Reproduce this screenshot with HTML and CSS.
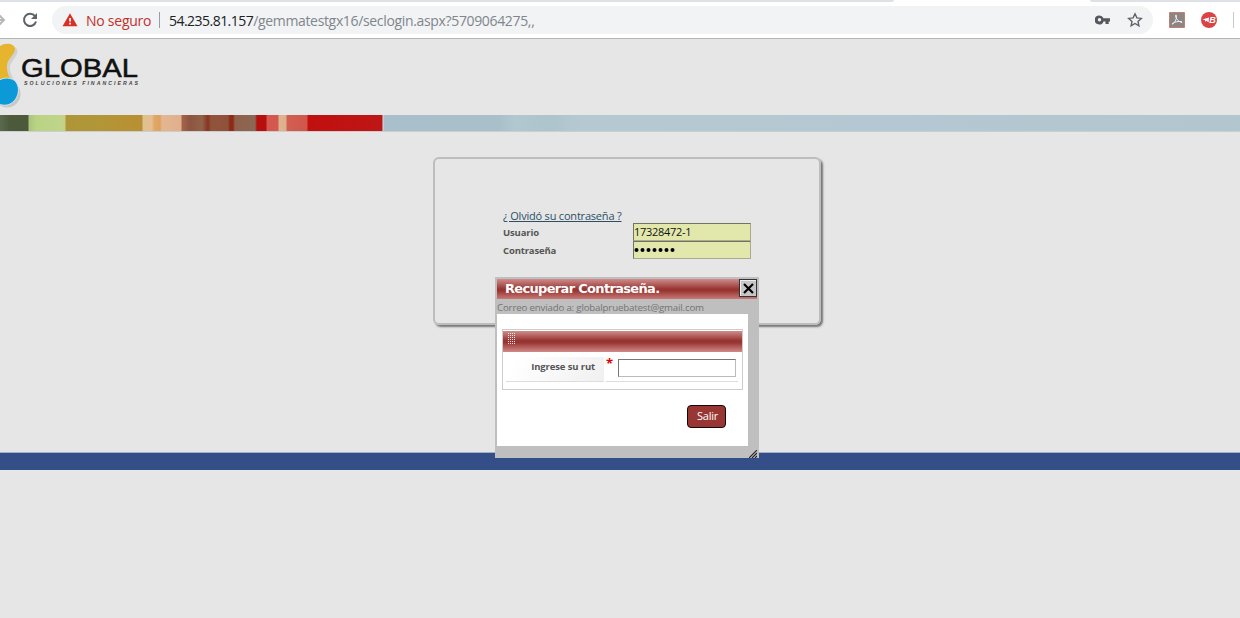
FILE: index.html
```html
<!DOCTYPE html>
<html lang="es">
<head>
<meta charset="utf-8">
<title>Recuperar Contraseña</title>
<link rel="stylesheet" href="styles.css">
</head>
<body>
<header class="browser">
  <div class="tabs"><i class="tab-left"></i><i class="tab-right"></i></div>
  <div class="toolbar">
    <svg class="forward" width="6" height="20" viewBox="0 0 6 20"><path d="M-2 10H4M-1 5L4 10L-1 15" fill="none" stroke="#b5b7ba" stroke-width="2"/></svg>
    <svg class="reload" width="16" height="16" viewBox="0 0 16 16"><path d="M13 4.2A6.1 6.1 0 1 0 14 9.5" fill="none" stroke="#5f6368" stroke-width="2"/><path d="M15 1V7H9Z" fill="#5f6368"/></svg>
    <div class="omnibox">
      <svg class="warn" width="16" height="14" viewBox="0 0 16 14"><path d="M8 .3L15.5 13.3H.5Z" fill="#d93025"/><path d="M7.2 5h1.7v3.6H7.2zM7.2 9.8h1.7v1.7H7.2z" fill="#fff"/></svg>
      <span class="insecure">No seguro</span><i class="sep"></i>
      <span class="host">54.235.81.157</span><span class="path">/gemmatestgx16/seclogin.aspx?5709064275,,</span>
      <svg class="key" width="16" height="10" viewBox="0 0 16 10"><path fill-rule="evenodd" d="M4.5.5A4.5 4.5 0 0 1 8.5 3.2H15V6.4H13.7V9H10.5V6.4H8.5A4.5 4.5 0 1 1 4.5.5ZM4.5 3.1A1.7 1.7 0 1 0 4.5 6.5A1.7 1.7 0 1 0 4.5 3.1Z" fill="#55595e"/></svg>
      <svg class="star" width="16" height="16" viewBox="0 0 16 16"><path d="M8 1.8L9.9 5.9L14.3 6.4L11 9.4L11.9 13.8L8 11.5L4.1 13.8L5 9.4L1.7 6.4L6.1 5.9Z" fill="none" stroke="#5f6368" stroke-width="1.4"/></svg>
    </div>
    <svg class="pdf" width="16" height="16" viewBox="0 0 16 16"><path d="M.5.5h15v15H.5z" fill="#8d8582" stroke="#c08074"/><path d="M3 12.2C5.5 11.5 7.8 7.5 7.4 3.5C7.2 2 6 3 6.8 5C8 8 10 10 13.3 10.6M3 12C5 9.8 9 9 13 9.7" fill="none" stroke="#eee" stroke-width="1"/></svg>
    <svg class="ext" width="16" height="16" viewBox="0 0 16 16"><circle cx="8" cy="8" r="8" fill="#dc4245"/><path d="M1.2 7.4L8 5.4L7.6 10.4L5.6 8.7L4.2 9.8L4 8Z" fill="#fff"/><text x="8.3" y="11.3" class="ext-letter">B</text></svg>
    <i class="bar-end"></i>
  </div>
</header>
<main class="page">
  <div class="brand">
    <svg width="150" height="76" viewBox="0 0 150 76">
      <path d="M0 7C6 3 15 5 15.5 10C16 16 7 20 8 29C9 34 11 37 13 40H0Z" fill="#aaa" opacity=".35" transform="translate(2 2)"/>
      <circle cx="7" cy="55" r="13.5" fill="#aaa" opacity=".5"/>
      <path d="M0 7C6 3 15 5 15 10C15 16 6 20 7 29C7 34 9 37 11 41H0Z" fill="#e6b52d"/>
      <path d="M-2 42C3 38 12 38 16 43C21 50 18 61 10 65C6 67 1 66-2 65Z" fill="#0b9ad7" stroke="#eef0f1" stroke-width=".8"/>
      <text class="logo-name" x="21" y="38" textLength="117" lengthAdjust="spacingAndGlyphs">GLOBAL</text>
      <text class="logo-sub" x="24" y="46" textLength="114">SOLUCIONES FINANCIERAS</text>
    </svg>
  </div>
  <div class="ribbon"></div>
  <section class="content">
    <form class="login">
      <a class="forgot">¿ Olvidó su contraseña ?</a>
      <div class="row"><label>Usuario</label><span class="field">17328472-1</span></div>
      <div class="row"><label>Contraseña</label><span class="field dots"><svg width="44" height="14" viewBox="0 0 44 14"><g fill="#000"><circle cx="2.5" cy="7" r="2"/><circle cx="8.5" cy="7" r="2"/><circle cx="14.5" cy="7" r="2"/><circle cx="20.5" cy="7" r="2"/><circle cx="26.5" cy="7" r="2"/><circle cx="32.5" cy="7" r="2"/><circle cx="38.5" cy="7" r="2"/></g></svg></span></div>
    </form>
  </section>
  <footer class="footer"></footer>
</main>
<div class="modal">
  <div class="titlebar"><span class="title">Recuperar Contraseña.</span>
    <span class="close"><svg width="11" height="11" viewBox="0 0 11 11"><path d="M1 1L10 10M10 1L1 10" stroke="#000" stroke-width="2.2"/></svg></span>
  </div>
  <div class="message">Correo enviado a: globalpruebatest@gmail.com</div>
  <div class="modal-body">
    <div class="group">
      <div class="group-head"><i class="grip"></i></div>
      <div class="group-row">
        <div class="cell-label">Ingrese su rut</div>
        <div class="cell-input"><span class="star-req">*</span><input class="rut" type="text"></div>
      </div>
    </div>
    <div class="actions"><button class="exit" type="button">Salir</button></div>
  </div>
  <svg class="resize" width="8" height="8" viewBox="0 0 8 8"><path d="M0 8L8 0M3 8L8 3M6 8L8 6" stroke="#222" stroke-width="1.1"/></svg>
</div>
</body>
</html>
```
FILE: styles.css
```css
* { box-sizing: border-box; }
body { margin: 0; width: 1240px; height: 618px; overflow: hidden; background: #e6e6e6; font-family: "Open Sans", sans-serif; font-size: 10.5px; color: #555; }
svg { display: block; flex: none; }
.browser { height: 39px; background: #fff; border-bottom: 1px solid #b5b5b5; }
.tabs { height: 2px; display: flex; justify-content: space-between; }
.tab-left { width: 894px; background: #dee1e6; border-radius: 0 0 4px 0; }
.tab-right { width: 150px; background: #dee1e6; border-radius: 0 0 0 4px; }
.toolbar { height: 36px; display: flex; align-items: center; }
.reload { margin-left: 16px; }
.omnibox { width: 1101px; height: 28px; margin-left: 14px; padding: 0 10px; border-radius: 14px; background: #f1f3f4; display: flex; align-items: center; font-size: 14px; white-space: nowrap; }
.insecure { width: 65px; margin-left: 8px; color: #c5302b; letter-spacing: -.25px; }
.sep { width: 1px; height: 16px; margin: 0 9px 0 8px; background: #9a9da1; }
.host { color: #202124; letter-spacing: -.53px; }
.path { color: #80868b; letter-spacing: -.34px; }
.key { margin-left: auto; margin-right: 16px; }
.pdf { margin-left: 16px; }
.ext { margin-left: 16px; }
.ext-letter { font: italic bold 9px "Liberation Sans", sans-serif; fill: #fff; }
.bar-end { width: 1px; height: 16px; margin-left: 16px; background: #c5c7ca; }
.brand { height: 76px; }
.logo-name { font: 25px "Liberation Sans", sans-serif; fill: #111; stroke: #111; stroke-width: .5px; }
.logo-sub { font: italic bold 5.2px "Liberation Sans", sans-serif; fill: #444; }
.ribbon { height: 17px; border-bottom: 1px solid #c9cfd1; background:
  linear-gradient(90deg, #5a6a50 0, #4c5a3b 10px, #4c5a3b 28px, #a9c57e 29px, #b9d384 36px, #bfd58a 60px, #c9cf84 65px, #ad9638 66px, #b29637 100px, #b98f33 142px, #dcc28d 143px, #e6bd91 152px, #dfa968 154px, #dfa25e 160px, #e5b692 162px, #e0b08d 181px, #a5644a 182px, #8d5440 190px, #916249 202px, #8a3322 208px, #90543b 211px, #90513b 228px, #8b2b18 230px, #8b2b18 233px, #91604b 235px, #8a6854 255px, #b70f0d 257px, #b70f0d 266px, #d45750 267px, #d15a50 278px, #dfb48d 279px, #dcb08c 286px, #d25f53 287px, #d05649 307px, #c10f0f 308px, #be1616 382px, #d8e0e3 383px, #a9bfcb 384px, #a9c0cb 500px, #b2c8d0 515px, #adc4cd 550px, #b5c9d2 580px, #b3c8d2 900px, #b2c6cf 1240px); }
.content { height: 320px; padding: 25px 0 0 433px; }
.login { width: 388px; height: 168px; padding: 49px 0 0 68px; border: 2px solid #bdbdbd; border-radius: 6px; box-shadow: 2px 2px 2px #777; }
.forgot { display: block; width: max-content; height: 15px; line-height: 15px; font-size: 11px; letter-spacing: -.2px; color: #2d4f65; text-decoration: underline; text-underline-offset: 1px; white-space: nowrap; }
.row { height: 18px; display: flex; align-items: center; }
.row label { width: 130px; padding-top: 1px; font-weight: 700; font-size: 9.5px; letter-spacing: -.15px; }
.field { width: 118px; height: 18px; border: 1px solid #a9aa91; border-top-color: #73745e; border-left-color: #73745e; background: #e2e8ac; color: #111; font-size: 11px; line-height: 16px; letter-spacing: -.3px; }
.dots svg { margin-top: 1px; }
.footer { height: 18px; background: #344f88; border-top: 1px solid #a3b1c8; }
.modal { position: absolute; left: 495px; top: 277px; width: 264px; height: 181px; padding: 2px; background: #bfbfbf; }
.titlebar { height: 20px; display: flex; justify-content: space-between; align-items: flex-start; background: linear-gradient(#cf8d8b, #983532 50%, #983532 58%, #c87976); }
.title { padding-left: 8px; font: bold 13px/19px "DejaVu Sans", sans-serif; letter-spacing: -.68px; color: #fff; }
.close { width: 18px; height: 18px; display: flex; align-items: center; justify-content: center; background: #c6c6c6; border: 1px solid #333; box-shadow: inset 1px 1px #eee; }
.message { height: 15px; line-height: 17px; font-size: 9.7px; letter-spacing: -.17px; color: #747474; white-space: nowrap; }
.modal-body { width: 251px; height: 132px; padding: 15px 5px 0; background: #fff; }
.group { height: 61px; border: 1px solid #ccc; padding-top: 1px; }
.group-head { height: 21px; padding: 2px 5px; background: linear-gradient(#cf8d8b, #983532 45%, #983532 55%, #d18b89); }
.grip { display: block; width: 8px; height: 12px; background: conic-gradient(transparent 75%, #f6e4e4 0) 0 0 / 2px 2px; }
.group-row { display: flex; gap: 2px; padding: 5px 4px 0 3px; }
.cell-label { width: 98px; height: 25px; padding-right: 9px; text-align: right; line-height: 20px; font-size: 9.5px; letter-spacing: -.13px; font-weight: 700; background: linear-gradient(120deg, #fff 10%, #f0f0f0); border-bottom: 1px solid #ddd; }
.cell-input { flex: 1; height: 25px; display: flex; padding: 2px 0 0 1px; border-bottom: 1px solid #ddd; }
.star-req { width: 11px; margin-top: -2px; margin-left: -1px; margin-right: 1px; line-height: 12px; font-size: 13px; font-weight: bold; color: #d00; }
.rut { width: 118px; height: 18px; padding: 0; border: 1px solid #bbb; border-top-color: #777; border-left-color: #777; background: #fff; }
.actions { display: flex; justify-content: flex-end; padding: 15px 17px 0 0; }
.exit { width: 39px; height: 23px; padding: 0 0 2px 2px; border: 1px solid #160808; border-radius: 4px; background: #983634; color: #fff; font: 11px "Open Sans", sans-serif; letter-spacing: -.2px; }
.resize { position: absolute; right: 2px; bottom: 0; }
```
